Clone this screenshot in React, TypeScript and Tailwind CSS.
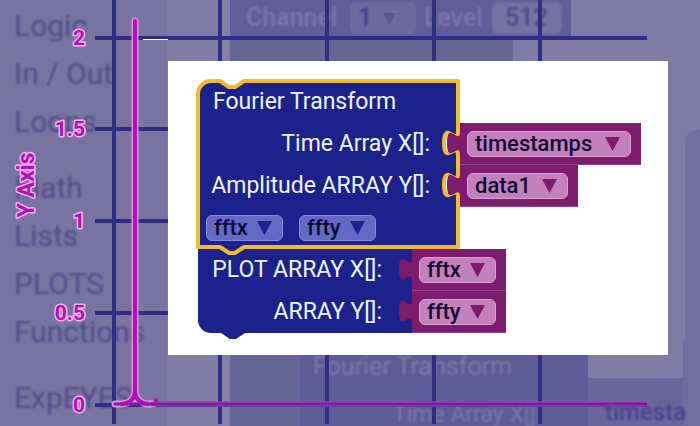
import React from "react";

const categories = [
  ["Logic", "In / Out", "Loops"],
  ["Math", "Lists", "PLOTS", "Functions"],
  ["ExpEYES"],
];

const ticks = [
  { label: "2", y: 38 },
  { label: "1.5", y: 129 },
  { label: "1", y: 221 },
  { label: "0.5", y: 313 },
  { label: "0", y: 405 },
];

const gridColumns = [114, 220, 327, 434, 540];

function Toolbox() {
  return (
    <nav className="flex w-[167px] shrink-0 flex-col gap-[18px] bg-[#78749f] pt-[2px] pl-[14px] text-[30px] text-[#514d8b]">
      {categories.map((group) => (
        <ul key={group[0]} className="blur-[1px]">
          {group.map((name) => (
            <li key={name} className="h-12">
              <button type="button" className="h-12 whitespace-nowrap leading-[48px]">
                {name}
              </button>
            </li>
          ))}
        </ul>
      ))}
    </nav>
  );
}

function Workspace() {
  return (
    <div className="absolute inset-0 flex overflow-hidden">
      <Toolbox />
      <div className="w-[55px] shrink-0 bg-[#7f7ba2]" />
      <div className="w-2 shrink-0 bg-[#8580aa]" />
      <div className="flex min-w-0 flex-1 flex-col bg-[#7f7ba2]">
        <div className="flex h-10 w-[341px] items-center bg-[#615d99] pr-2 pb-1 pl-4 text-[25px] text-[#7c78ac]">
          <label htmlFor="channel" className="w-[104px] font-medium blur-[1px]">
            Channel
          </label>
          <span className="relative flex h-8 w-[66px] items-center rounded-md bg-[#6e6a9f] text-[#403c8a]">
            <select id="channel" className="w-full appearance-none pl-2 leading-8 font-medium blur-[1px]">
              <option>1</option>
            </select>
            <svg className="pointer-events-none absolute top-[11px] right-5" width="13" height="12">
              <path d="M0 0H13L6.500 12Z" fill="#5b5795" />
            </svg>
          </span>
          <label htmlFor="level" className="w-[76px] pl-2 font-medium blur-[1px]">
            Level
          </label>
          <input
            id="level"
            defaultValue="512"
            className="h-8 w-[70px] rounded-md bg-[#7571a2] pl-[13px] font-medium text-[#4d498d] blur-[1px]"
          />
        </div>
        <div className="h-6 w-[283px] bg-[#656694]" />
        <div className="flex flex-1" />
        <div className="flex h-[86px] text-[25px] text-[#7d79ab]">
          <div className="w-[70px] bg-[#656696]" />
          <div className="w-[288px] bg-[#5f5b97] pt-[11px] pl-[13px]">
            <p className="leading-[32px] blur-[1px]">Fourier Transform</p>
            <p className="pt-4 pl-20 text-[23px] leading-[32px] whitespace-nowrap blur-[1px]">Time Array X[]:</p>
          </div>
          <div className="flex w-[95px] flex-col">
            <div className="h-[38px]" />
            <p className="flex-1 bg-[#6a659b] pt-[21px] pl-[17px] text-[24px] leading-[26px] font-medium whitespace-nowrap text-[#46428a]">
              <span className="blur-[1px]">timesta</span>
            </p>
          </div>
          <div className="flex-1 bg-[#716d9f]" />
        </div>
      </div>
      <div className="mt-[130px] w-[15px] shrink-0 rounded-tl-xl bg-[#716d9f]" />
    </div>
  );
}

function Plot() {
  return (
    <svg className="absolute top-0 left-0" width="700" height="426" viewBox="0 0 700 426">
      <g stroke="#302d86" strokeWidth="4">
        {gridColumns.map((x) => (
          <line key={x} x1={x} x2={x} y1="0" y2="424" />
        ))}
        {ticks.map((t) => (
          <line key={t.label} x1="95" x2="647" y1={t.y} y2={t.y} />
        ))}
      </g>
      <line x1="143" x2="168" y1="39.5" y2="39.5" stroke="#fff" />
      <g fill="none" strokeLinecap="round" strokeLinejoin="round">
        <path d="M135 21V392Q134 403 122 404H115M135 392Q136 403 148 404H153" stroke="#dd8fe2" strokeWidth="7" />
        <path d="M153 404H646" stroke="#a24bb8" strokeWidth="5" />
        <path d="M115 404H646" stroke="#7a1f9c" strokeWidth="3" />
        <path d="M135 21V392Q134 403 122 404M135 392Q136 403 148 404M156 403V400" stroke="#b010b8" strokeWidth="4" />
      </g>
      <g
        fill="#b010b4"
        stroke="#f0b4f0"
        strokeWidth="3"
        paintOrder="stroke"
        strokeLinejoin="round"
        className="text-[21px] font-bold"
      >
        {ticks.map((t) => (
          <text key={t.label} x="85" y={t.y + 7} textAnchor="end">
            {t.label}
          </text>
        ))}
        <text transform="translate(34 185) rotate(-90)" textAnchor="middle" className="text-[23px]">
          Y Axis
        </text>
      </g>
    </svg>
  );
}

type FieldProps = { id?: string; value: string; width: string; tone: string; arrow: string; labelledBy?: string };

function Field({ id, value, width, tone, arrow, labelledBy }: FieldProps) {
  return (
    <span className={`relative block h-[26px] ${width}`}>
      <select
        id={id}
        aria-labelledby={labelledBy}
        className={`block h-[26px] w-full appearance-none rounded-md border pl-[7px] text-[22px] leading-[24px] font-medium ${tone}`}
      >
        <option>{value}</option>
      </select>
      <svg className="pointer-events-none absolute top-[6px] right-[11px]" width="15" height="14">
        <path d="M0 0H15L7.500 14Z" fill={arrow} />
      </svg>
    </span>
  );
}

function ValueBlock({ id, value, width }: { id: string; value: string; width: string }) {
  return (
    <div className="relative flex h-[42px] items-center border-b border-[#93408a] bg-[#7e1b6c] pr-[10px] pl-[7px]">
      <svg className="absolute top-[8px] -left-[13px]" width="14" height="25">
        <path d="M14 0H13C13 16 0 -12 0 12S13 8 13 25H14Z" fill="#7e1b6c" />
      </svg>
      <Field id={id} value={value} width={width} tone="border-[#d9a0d3] bg-[#c281ba] text-[#120a35]" arrow="#7e1b6c" />
    </div>
  );
}

type InputRowProps = { id: string; label: string; value: string; labelWidth: string; width: string };

function InputRow({ id, label, value, labelWidth, width }: InputRowProps) {
  return (
    <div className="flex h-[42px]">
      <label htmlFor={id} className={`shrink-0 pr-[30px] text-right leading-[42px] ${labelWidth}`}>
        {label}
      </label>
      <ValueBlock id={id} value={value} width={width} />
    </div>
  );
}

const blueField = "border-[#858be0] bg-[#636ac2] text-[#0b0b3c]";

function BlockStack() {
  return (
    <div className="relative text-[23px] text-[#eef4ff]">
      <svg className="absolute -top-1 -left-1 overflow-visible" width="270" height="264" viewBox="-4 -4 270 264">
        <path d="M1 167H215V252H48L39 258H33L24 252H14A13 13 0 0 1 1 239Z" fill="#1c228b" />
        <path
          d="M1 166V13A13 13 0 0 1 14 0H23L32 6H38L47 0H261V50C261 66 247 38 247 62S261 58 261 75V92C261 108 247 80 247 104S261 100 261 117V166H47L38 172H32L23 166Z"
          fill="#1c228b"
          stroke="#f3bb2f"
          strokeWidth="4"
          strokeLinejoin="round"
        />
      </svg>
      <div className="relative">
        <h2 id="fourier" className="h-[42px] pl-4 leading-[42px]">
          Fourier Transform
        </h2>
        <InputRow id="time" label="Time Array X[]:" value="timestamps" labelWidth="w-[263px]" width="w-[164px]" />
        <InputRow id="amplitude" label="Amplitude ARRAY Y[]:" value="data1" labelWidth="w-[263px]" width="w-[101px]" />
        <div className="flex h-[42px] items-center gap-4 pl-[9px]">
          <Field value="fftx" width="w-[77px]" tone={blueField} arrow="#1c228b" labelledBy="fourier" />
          <Field value="ffty" width="w-[77px]" tone={blueField} arrow="#1c228b" labelledBy="fourier" />
        </div>
        <InputRow id="plotx" label="PLOT ARRAY X[]:" value="fftx" labelWidth="w-[215px]" width="w-[77px]" />
        <InputRow id="ploty" label="ARRAY Y[]:" value="ffty" labelWidth="w-[215px]" width="w-[77px]" />
      </div>
    </div>
  );
}

export default function App() {
  return (
    <div className="relative min-h-screen overflow-hidden bg-[#7f7ba2] font-['Roboto','Liberation_Sans',sans-serif]">
      <Workspace />
      <Plot />
      <main className="relative pt-[61px] pr-8 pl-[168px]">
        <section className="bg-white pt-5 pb-[22px] pl-[29px]">
          <BlockStack />
        </section>
      </main>
    </div>
  );
}
